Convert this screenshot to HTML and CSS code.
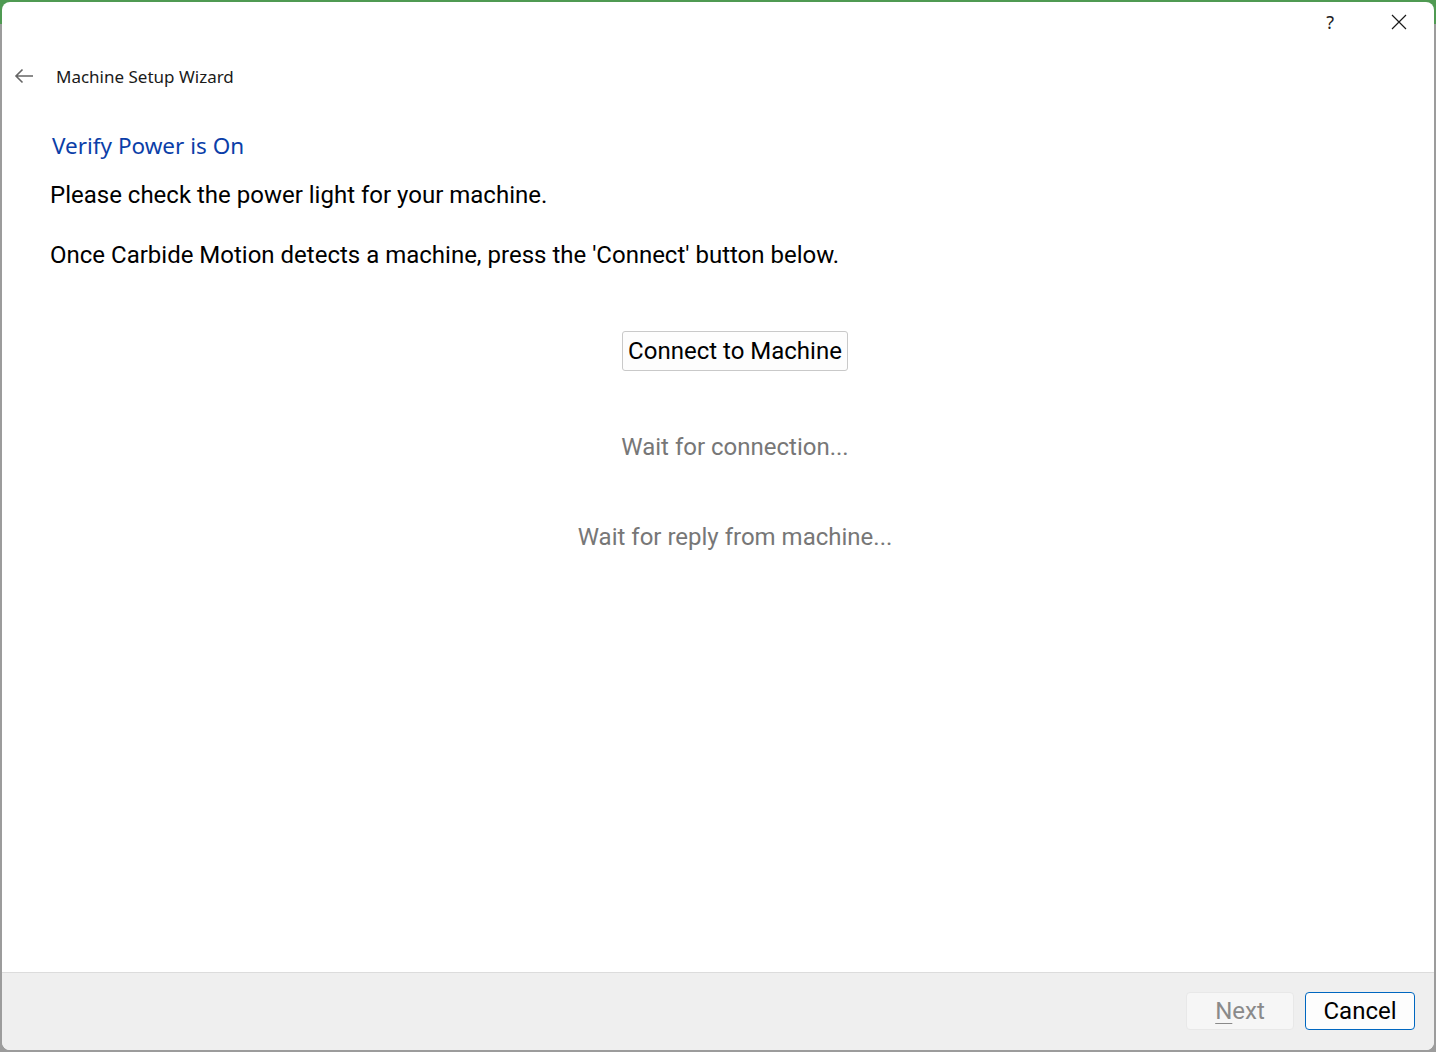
FILE: index.html
```html
<!DOCTYPE html>
<html>
<head>
<meta charset="utf-8">
<link rel="stylesheet" href="styles.css">
</head>
<body>
<div class="frame">
  <div class="window">
    <div class="titlebar">
      <span class="help">?</span>
      <span class="close">
        <svg width="16" height="16" viewBox="0 0 16 16"><path d="M1 1 L15 15 M15 1 L1 15" stroke="#1a1a1a" stroke-width="1.2" fill="none"/></svg>
      </span>
    </div>
    <div class="header">
      <svg class="back" width="20" height="16" viewBox="0 0 20 16"><path d="M19 8 H2 M8.5 1.5 L2 8 L8.5 14.5" stroke="#666" stroke-width="1.6" fill="none"/></svg>
      <span class="wtitle">Machine Setup Wizard</span>
    </div>
    <div class="content">
      <h1 class="heading">Verify Power is On</h1>
      <p class="para">Please check the power light for your machine.</p>
      <p class="para p2">Once Carbide Motion detects a machine, press the 'Connect' button below.</p>
      <div class="center">
        <button class="connect">Connect to Machine</button>
        <div class="status s1">Wait for connection...</div>
        <div class="status s2">Wait for reply from machine...</div>
      </div>
    </div>
    <div class="footer">
      <button class="btn next"><u>N</u>ext</button>
      <button class="btn cancel">Cancel</button>
    </div>
  </div>
</div>
</body>
</html>
```
FILE: styles.css
```css
html, body {
  margin: 0;
  padding: 0;
}
body {
  width: 1436px;
  height: 1052px;
  overflow: hidden;
}
.frame {
  box-sizing: border-box;
  width: 1436px;
  height: 1052px;
  padding: 2px 2px 2px 2px;
  background: linear-gradient(to bottom, #4f9a52 0, #4f9a52 24px, #9c9c9c 24px);
}
.window {
  box-sizing: border-box;
  height: 1048px;
  background: #ffffff;
  border-radius: 8px;
  display: flex;
  flex-direction: column;
  overflow: hidden;
  font-family: "Roboto", "Liberation Sans", sans-serif;
}
.titlebar {
  height: 44px;
  display: flex;
  align-items: center;
  justify-content: flex-end;
  flex-shrink: 0;
}
.help {
  font-family: "Noto Sans", "Open Sans", sans-serif;
  font-size: 18px;
  color: #222;
  margin-right: 57px;
  line-height: 20px;
  margin-top: -4px;
}
.close {
  display: flex;
  margin-right: 27px;
  margin-top: -4px;
}
.header {
  height: 60px;
  display: flex;
  align-items: center;
  flex-shrink: 0;
}
.back {
  margin-left: 12px;
  margin-right: 22px;
}
.wtitle {
  font-family: "Noto Sans", "Open Sans", sans-serif;
  font-size: 17px;
  color: #1a1a1a;
}
.content {
  flex: 1;
  padding: 25px 14px 0 48px;
}
.heading {
  margin: 0;
  font-family: "Noto Sans", "Open Sans", sans-serif;
  font-weight: normal;
  font-size: 22.5px;
  line-height: 30px;
  color: #0b3ea8;
  padding-left: 2px;
}
.para {
  margin: 19px 0 0 0;
  font-size: 24px;
  line-height: 30px;
  color: #000;
}
.para.p2 {
  margin-top: 30px;
}
.center {
  display: flex;
  flex-direction: column;
  align-items: center;
}
.connect {
  margin-top: 61px;
  height: 40px;
  padding: 0 5px;
  font-family: "Roboto", "Liberation Sans", sans-serif;
  font-size: 24px;
  color: #000;
  background: #fdfdfd;
  border: 1px solid #c9c9c9;
  border-radius: 3px;
}
.status {
  font-size: 24px;
  line-height: 30px;
  color: #777777;
}
.s1 {
  margin-top: 61px;
}
.s2 {
  margin-top: 60px;
}
.footer {
  height: 78px;
  box-sizing: border-box;
  flex-shrink: 0;
  background: #efefef;
  border-top: 1px solid #dcdcdc;
  display: flex;
  justify-content: flex-end;
  align-items: flex-start;
  padding: 19px 19px 0 0;
  gap: 11px;
}
.btn {
  height: 38px;
  font-family: "Roboto", "Liberation Sans", sans-serif;
  font-size: 24px;
  border-radius: 4px;
  padding: 0;
}
.next {
  width: 108px;
  background: #f6f6f6;
  border: 1px solid #e8e8e8;
  color: #8a8a8a;
}
.next u {
  text-decoration-thickness: 1px;
  text-underline-offset: 4px;
}
.cancel {
  width: 110px;
  background: #fdfdfd;
  border: 1px solid #0067c0;
  color: #000;
}
```
